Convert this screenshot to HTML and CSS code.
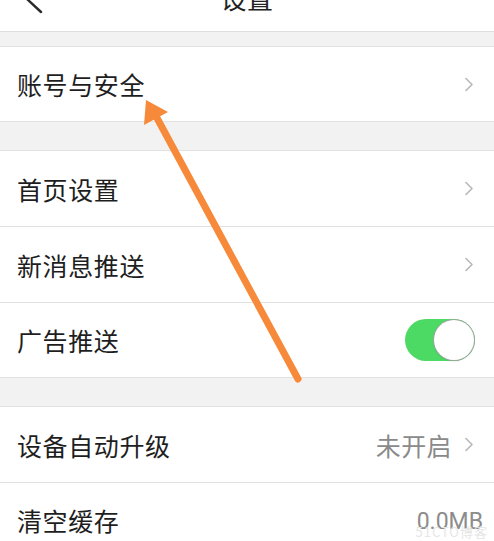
FILE: index.html
```html
<!DOCTYPE html>
<html lang="zh-CN">
<head>
<meta charset="utf-8">
<title>设置</title>
<link rel="stylesheet" href="styles.css">
</head>
<body>
<div class="page">
  <header class="topbar">
    <svg class="back" width="30" height="31" viewBox="0 0 30 31"><path d="M22 -14 L8 -1 L22 12" fill="none" stroke="#2a2a2a" stroke-width="2.4" stroke-linecap="round" stroke-linejoin="round"/></svg>
    <div class="title">设置</div>
    <div class="spacer"></div>
  </header>

  <section class="group first">
    <div class="row"><span class="label">账号与安全</span><span class="right"><svg class="chev" width="10" height="15" viewBox="0 0 10 15"><path d="M2 1.5 L8 7.5 L2 13.5" fill="none" stroke="#b8b8b8" stroke-width="1.6" stroke-linecap="round" stroke-linejoin="round"/></svg></span></div>
  </section>

  <section class="group">
    <div class="row"><span class="label">首页设置</span><span class="right"><svg class="chev" width="10" height="15" viewBox="0 0 10 15"><path d="M2 1.5 L8 7.5 L2 13.5" fill="none" stroke="#b8b8b8" stroke-width="1.6" stroke-linecap="round" stroke-linejoin="round"/></svg></span></div>
    <div class="row"><span class="label">新消息推送</span><span class="right"><svg class="chev" width="10" height="15" viewBox="0 0 10 15"><path d="M2 1.5 L8 7.5 L2 13.5" fill="none" stroke="#b8b8b8" stroke-width="1.6" stroke-linecap="round" stroke-linejoin="round"/></svg></span></div>
    <div class="row"><span class="label">广告推送</span><span class="toggle on"><span class="knob"></span></span></div>
  </section>

  <section class="group">
    <div class="row"><span class="label">设备自动升级</span><span class="right"><span class="value">未开启</span><svg class="chev" width="10" height="15" viewBox="0 0 10 15"><path d="M2 1.5 L8 7.5 L2 13.5" fill="none" stroke="#b8b8b8" stroke-width="1.6" stroke-linecap="round" stroke-linejoin="round"/></svg></span></div>
    <div class="row last"><span class="label">清空缓存</span><span class="size">0.0MB</span></div>
  </section>

  <div class="watermark">51CTO博客</div>

  <svg class="arrow" width="494" height="541" viewBox="0 0 494 541">
    <line x1="298" y1="379" x2="157" y2="118" stroke="#f68a3a" stroke-width="7" stroke-linecap="round"/>
    <polygon points="146,100 144,125 168,112" fill="#f68a3a"/>
  </svg>
</div>
</body>
</html>
```

FILE: styles.css
```css
* { box-sizing: border-box; }
html, body {
  margin: 0;
  padding: 0;
  background: #f2f2f2;
}
body {
  font-family: "Noto Sans CJK SC", "Noto Sans", sans-serif;
  color: #1e1e1e;
}
.page {
  position: relative;
  width: 494px;
  height: 541px;
  overflow: hidden;
  background: #f2f2f2;
}
.topbar {
  height: 32px;
  background: #fff;
  border-bottom: 1px solid #dedede;
  display: grid;
  grid-template-columns: 1fr auto 1fr;
  align-items: start;
  overflow: hidden;
}
.back {
  display: block;
  margin-left: 19px;
}
.title {
  font-size: 26px;
  line-height: 26px;
  height: 26px;
  margin-top: -15px;
  color: #222;
  letter-spacing: 0.5px;
}
.group {
  background: #fff;
  border-top: 1px solid #e2e2e2;
  border-bottom: 1px solid #e2e2e2;
  margin-top: 28px;
}
.group.first {
  margin-top: 14px;
}
.row {
  height: 76px;
  display: flex;
  align-items: center;
  justify-content: space-between;
  padding: 0 20px 0 17px;
  border-bottom: 1px solid #e2e2e2;
}
.row:last-child {
  height: 74px;
  border-bottom: none;
}
.label {
  font-size: 25px;
  letter-spacing: 0.6px;
}
.right {
  display: flex;
  align-items: center;
  gap: 12px;
}
.chev {
  display: block;
}
.value {
  font-size: 25px;
  color: #8a8a8a;
  letter-spacing: 0.4px;
}
.size {
  font-family: "Roboto", "Liberation Sans", sans-serif;
  font-size: 23px;
  color: #8c8c8c;
  margin-right: -9px;
  margin-top: 2px;
}
.toggle {
  position: relative;
  width: 70px;
  height: 42px;
  border-radius: 21px;
  background: #4cd964;
  margin-right: -1px;
}
.knob {
  position: absolute;
  right: 1px;
  top: 1px;
  width: 40px;
  height: 40px;
  border-radius: 50%;
  background: #fff;
  box-shadow: 0 0 0 1px #9aa89c, 0 1px 2px rgba(0,0,0,0.15);
}
.watermark {
  position: absolute;
  right: 6px;
  top: 524px;
  font-size: 13px;
  line-height: 16px;
  color: #e6e6e6;
  font-family: "Noto Sans CJK SC", sans-serif;
  letter-spacing: 1px;
}
.arrow {
  position: absolute;
  left: 0;
  top: 0;
  pointer-events: none;
}
```
